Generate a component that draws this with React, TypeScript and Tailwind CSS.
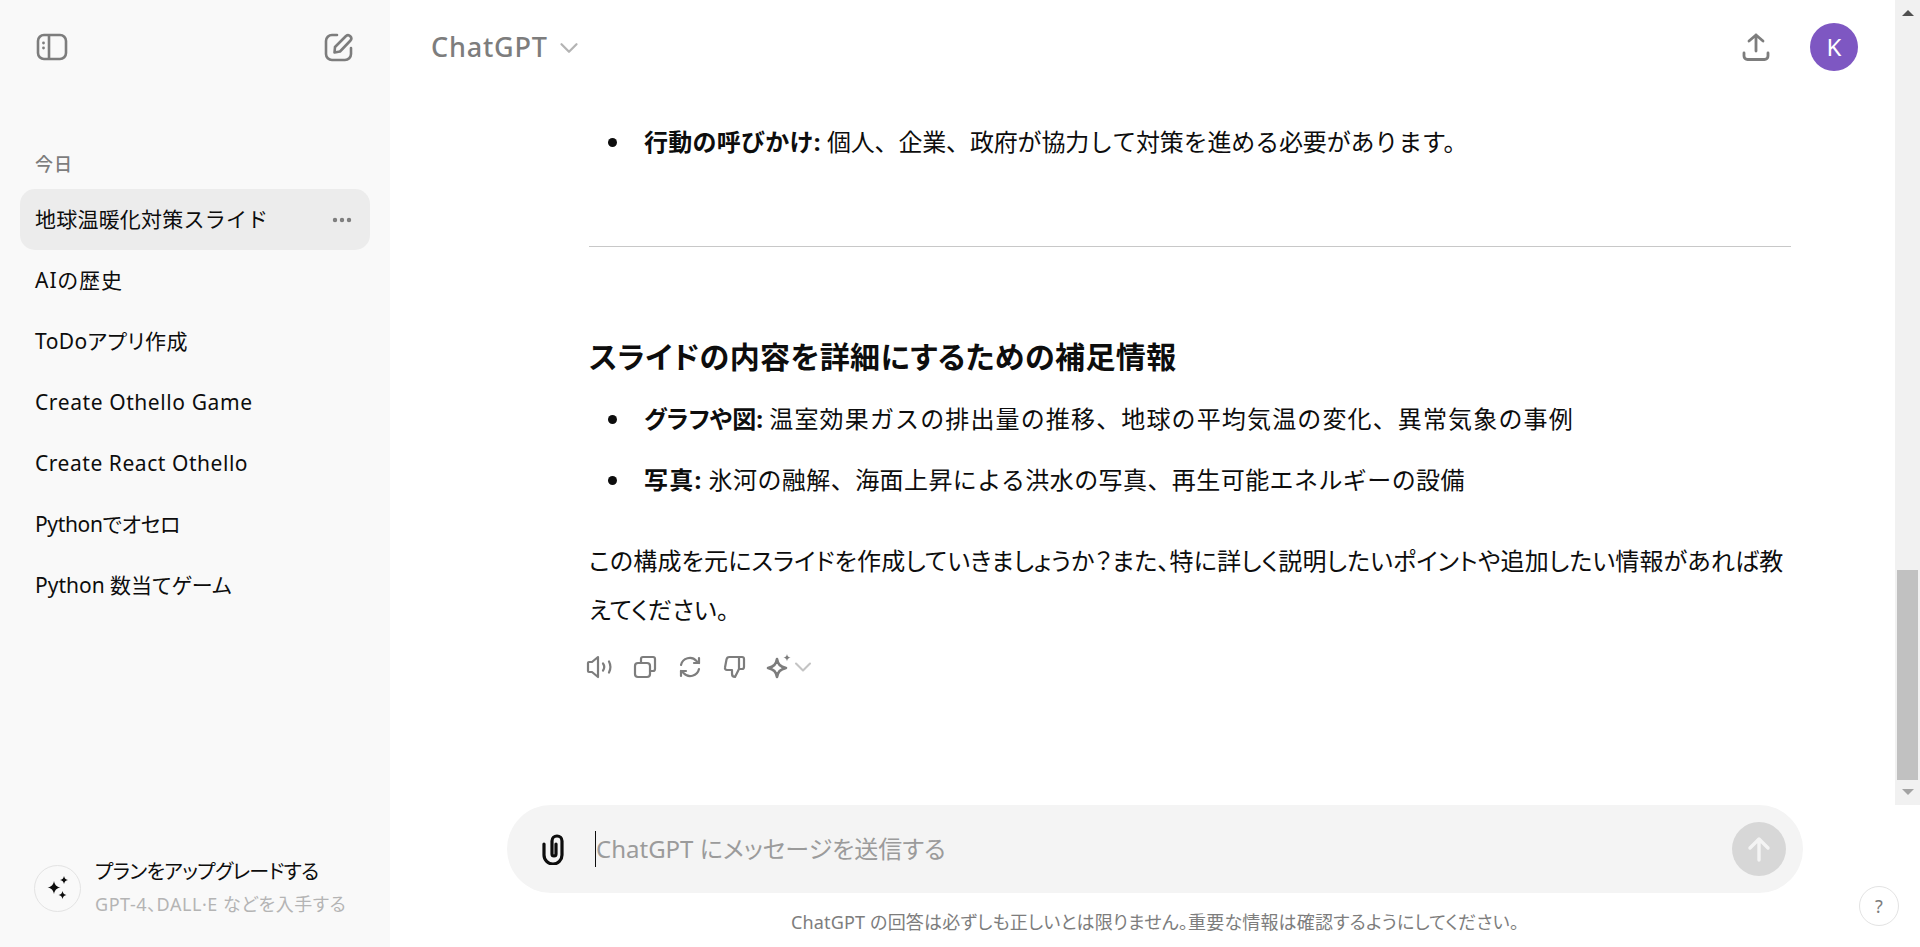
import { ChevronDown, Ellipsis } from "lucide-react";

const font = "font-['Noto_Sans','Noto_Sans_CJK_JP',sans-serif]";
const palt = "[font-feature-settings:'palt']";

const chats = [
  { label: "地球温暖化対策スライド", cls: "tracking-[0.01em]" },
  { label: "AIの歴史", cls: `${palt} tracking-[0.05em]` },
  { label: "ToDoアプリ作成", cls: `${palt} tracking-[0.02em]` },
  { label: "Create Othello Game", cls: `${palt} tracking-[0.028em]` },
  { label: "Create React Othello", cls: `${palt} tracking-[0.026em]` },
  { label: "Pythonでオセロ", cls: `${palt} tracking-[-0.017em]` },
  { label: "Python 数当てゲーム", cls: palt },
];

function Sidebar() {
  return (
    <aside className="flex h-full w-[390px] shrink-0 flex-col bg-[#f9f9f9] px-5">
      <div className="flex h-[94px] items-center justify-between px-[16px]">
        <svg width="32" height="28" viewBox="0 0 32 28" fill="none" stroke="#7d7d7d" strokeWidth="2.6">
          <rect x="2" y="2" width="28" height="24" rx="6" />
          <path d="M13 2v24" />
          <circle cx="7.5" cy="10" r="1.4" fill="#7d7d7d" stroke="none" />
          <circle cx="7.5" cy="15" r="1.4" fill="#7d7d7d" stroke="none" />
        </svg>
        <svg width="30" height="30" viewBox="0 0 30 30" fill="none" stroke="#7d7d7d" strokeWidth="2.6" strokeLinecap="round" strokeLinejoin="round">
          <path d="M13 3H8a6 6 0 0 0-6 6v13a6 6 0 0 0 6 6h13a6 6 0 0 0 6-6v-6" />
          <path d="M11 15 22 4a3.2 3.2 0 0 1 4.5 4.5L16 19.5l-5.500 1z" />
        </svg>
      </div>
      <div className="mt-[58px] px-[15px] text-[18px] leading-6 font-medium tracking-[0.05em] text-[#7d7d7d]">今日</div>
      <nav className="mt-[13px] flex flex-col text-[21px] text-[#0d0d0d]">
        {chats.map((c, i) => (
          <div
            key={c.label}
            className={`flex h-[61px] items-center justify-between rounded-[15px] pr-[16px] pl-[15px] ${i === 0 ? "bg-[#ececec]" : ""}`}
          >
            <span className={c.cls}>{c.label}</span>
            {i === 0 && <Ellipsis size={24} strokeWidth={2.4} className="text-[#7d7d7d]" />}
          </div>
        ))}
      </nav>
      <div className="mt-auto mb-[26px] flex items-center gap-[14px] px-[14px]">
        <div className="flex h-[47px] w-[47px] shrink-0 items-center justify-center rounded-full border border-[#e3e3e3]">
          <svg width="26" height="26" viewBox="0 0 26 26" fill="#0d0d0d">
            <path d="M9 6c.8 4 2.400 5.600 6.500 6.500C11.400 13.400 9.800 15 9 19c-.8-4-2.400-5.600-6.500-6.500C6.600 11.600 8.200 10 9 6z" />
            <path d="M19 1c.5 2.500 1.500 3.500 4 4-2.500.5-3.500 1.500-4 4-.5-2.500-1.500-3.500-4-4 2.500-.5 3.500-1.500 4-4z" />
            <path d="M17.500 16c.5 2.500 1.500 3.500 4 4-2.500.5-3.500 1.500-4 4-.5-2.500-1.500-3.500-4-4 2.500-.5 3.500-1.500 4-4z" />
          </svg>
        </div>
        <div className={`whitespace-nowrap ${palt}`}>
          <div className="text-[20px] leading-[33px] tracking-[-0.033em] text-[#0d0d0d]">プランをアップグレードする</div>
          <div className="text-[18px] leading-[33px] tracking-[0.03em] text-[#b4b4b4]">GPT-4、DALL·E などを入手する</div>
        </div>
      </div>
    </aside>
  );
}

function MessageActions() {
  return (
    <div className="mt-[21px] -ml-[3px] flex h-[24px] items-center gap-[21px]">
      <svg width="26" height="24" viewBox="0 0 26 24" fill="none" stroke="#7d7d7d" strokeWidth="2.2" strokeLinecap="round" strokeLinejoin="round">
        <path d="M2 8v8a1 1 0 0 0 1 1h3l6 5V2L6 7H3a1 1 0 0 0-1 1z" />
        <path d="M17 8.500a6 6 0 0 1 0 7" />
        <path d="M23 6.500a12 12 0 0 1 0 11" />
      </svg>
      <svg width="24" height="24" viewBox="0 0 24 24" fill="none" stroke="#7d7d7d" strokeWidth="2.2" strokeLinecap="round" strokeLinejoin="round">
        <path d="M8 7V4a2 2 0 0 1 2-2h10a2 2 0 0 1 2 2v10a2 2 0 0 1-2 2h-3" />
        <rect x="2" y="8" width="15" height="14" rx="3" />
      </svg>
      <svg width="24" height="24" viewBox="0 0 24 24" fill="none" stroke="#7d7d7d" strokeWidth="2.2" strokeLinecap="round" strokeLinejoin="round">
        <path d="M3 10a9 9 0 0 1 15.500-4L21 8" />
        <path d="M21 3v5h-5" />
        <path d="M21 14a9 9 0 0 1-15.500 4L3 16" />
        <path d="M3 21v-5h5" />
      </svg>
      <svg width="24" height="24" viewBox="0 0 24 24" fill="none" stroke="#7d7d7d" strokeWidth="2.2" strokeLinecap="round" strokeLinejoin="round">
        <path d="M7 2h9v12l-4 8c-2 0-3-1.500-3-3.500V15H4a2 2 0 0 1-2-2.500l1.500-8A3 3 0 0 1 6.500 2z" />
        <path d="M16 2h3a2 2 0 0 1 2 2v8a2 2 0 0 1-2 2h-3" />
      </svg>
      <div className="-ml-[2px] flex items-center">
        <svg width="26" height="26" viewBox="0 0 26 26" fill="none" stroke="#7d7d7d" strokeWidth="2.6" strokeLinejoin="round">
          <path d="M11 5c1 5.500 3 7.500 9 9-6 1.500-8 3.500-9 9-1-5.500-3-7.500-9-9 6-1.500 8-3.500 9-9z" />
          <path d="M21 0c.4 2.200 1.400 3.200 3.600 3.600-2.200.4-3.200 1.400-3.600 3.600-.4-2.200-1.400-3.200-3.600-3.600 2.200-.4 3.200-1.400 3.600-3.600z" fill="#7d7d7d" stroke="none" />
        </svg>
        <ChevronDown size={28} strokeWidth={1.8} className="-ml-[3px] text-[#c4c4c4]" />
      </div>
    </div>
  );
}

function Conversation() {
  return (
    <div className="ml-[199px] w-[1202px] pt-[23px] text-[24px] leading-[49px] text-[#0d0d0d]">
      <ul className="list-disc pl-[43px]">
        <li className="pl-[12px]">
          <b className="font-bold tracking-[0.01em]">行動の呼びかけ:</b>{" "}
          <span className="tracking-[-0.007em]">個人、企業、政府が協力して対策を進める必要があります。</span>
        </li>
      </ul>
      <hr className="mt-[80px] border-[#c8c8c8]" />
      <h3 className={`mt-[85px] text-[30px] leading-[50px] font-bold tracking-[0.014em] ${palt}`}>
        スライドの内容を詳細にするための補足情報
      </h3>
      <ul className="mt-[12px] list-disc pl-[43px]">
        <li className="pl-[12px]">
          <b className={`font-bold ${palt}`}>グラフや図:</b>{" "}
          <span className="tracking-[0.0475em]">温室効果ガスの排出量の推移、地球の平均気温の変化、異常気象の事例</span>
        </li>
        <li className="mt-[12px] pl-[12px]">
          <b className="font-bold tracking-[0.05em]">写真:</b>{" "}
          <span className="tracking-[0.0175em]">氷河の融解、海面上昇による洪水の写真、再生可能エネルギーの設備</span>
        </li>
      </ul>
      <p className={`mt-[32px] tracking-[0.0075em] ${palt}`}>
        この構成を元にスライドを作成していきましょうか？また、特に詳しく説明したいポイントや追加したい情報があれば教えてください。
      </p>
      <MessageActions />
    </div>
  );
}

function Composer() {
  return (
    <div className="ml-[117px] flex h-[88px] w-[1296px] items-center rounded-[44px] bg-[#f4f4f4] pr-[17px] pl-[34px]">
      <svg width="24" height="32" viewBox="0 0 24 32" fill="none" stroke="#0d0d0d" strokeWidth="3.2" strokeLinecap="round">
        <path d="M3 11v11a9 9 0 0 0 18 0V8a5 5 0 0 0-10 0v13a2 2 0 0 0 4 0V11" />
      </svg>
      <div className={`ml-[30px] flex items-center text-[24px] text-[#9b9b9b] ${palt}`}>
        <span className="h-[36px] w-[1px] bg-[#0d0d0d]" />
        ChatGPT にメッセージを送信する
      </div>
      <div className="ml-auto flex h-[54px] w-[54px] items-center justify-center rounded-full bg-[#d7d7d7]">
        <svg width="28" height="28" viewBox="0 0 28 28" fill="none" stroke="#f4f4f4" strokeWidth="3.4" strokeLinecap="round" strokeLinejoin="round">
          <path d="M14 25V4M5 13l9-9 9 9" />
        </svg>
      </div>
    </div>
  );
}

export default function App() {
  return (
    <div className={`flex h-[947px] w-full overflow-hidden bg-white ${font}`}>
      <Sidebar />
      <main className="relative flex min-w-0 flex-1 flex-col">
        <header className="flex h-[94px] shrink-0 items-center justify-between pr-[62px] pl-[41px]">
          <div className="flex items-center gap-[6px] text-[27px] font-medium tracking-[0.03em] text-[#7d7d7d]">
            ChatGPT
            <ChevronDown size={30} strokeWidth={1.8} className="mt-[2px] text-[#b4b4b4]" />
          </div>
          <div className="flex items-center gap-[40px]">
            <svg width="28" height="28" viewBox="0 0 28 28" fill="none" stroke="#7d7d7d" strokeWidth="2.8" strokeLinecap="round" strokeLinejoin="round">
              <path d="M14 18V2M7 8l7-6 7 6" />
              <path d="M2 20v3a3.500 3.500 0 0 0 3.500 3.500h17A3.500 3.500 0 0 0 26 23v-3" />
            </svg>
            <div className="flex h-[48px] w-[48px] items-center justify-center rounded-full bg-[#7e57c2] text-[24px] text-white">K</div>
          </div>
        </header>
        <div className="min-h-0 flex-1 overflow-hidden">
          <Conversation />
        </div>
        <div className="h-[142px] shrink-0">
          <Composer />
          <div className={`mt-[17px] ml-[117px] w-[1296px] text-center text-[18px] leading-6 tracking-[0.01em] text-[#7d7d7d] ${palt}`}>
            ChatGPT の回答は必ずしも正しいとは限りません。重要な情報は確認するようにしてください。
          </div>
        </div>
        <div className="absolute top-0 right-0 flex h-[805px] w-[25px] flex-col justify-between bg-[#f1f1f1] py-[10px]">
          <div className="mx-auto h-0 w-0 border-x-[6px] border-b-[6px] border-x-transparent border-b-[#505050]" />
          <div className="mx-auto h-0 w-0 border-x-[6px] border-t-[6px] border-x-transparent border-t-[#a3a3a3]" />
        </div>
        <div className="absolute top-[570px] right-[2px] h-[210px] w-[21px] bg-[#c1c1c1]" />
        <div className="absolute right-[21px] bottom-[21px] flex h-[40px] w-[40px] items-center justify-center rounded-full border border-[#e3e3e3] text-[18px] text-[#7d7d7d]">?</div>
      </main>
    </div>
  );
}
